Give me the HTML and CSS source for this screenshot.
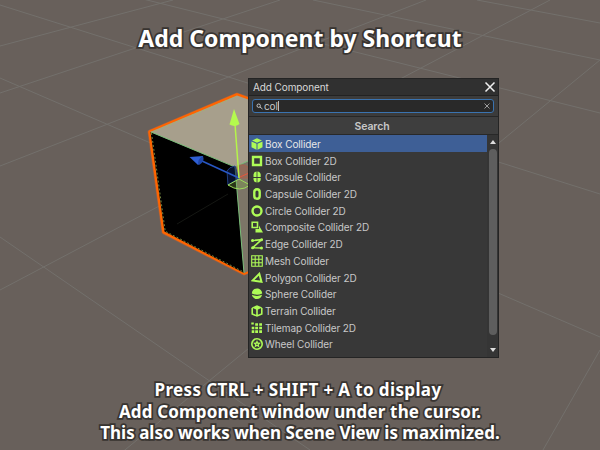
FILE: index.html
```html
<!DOCTYPE html>
<html lang="en">
<head>
<meta charset="utf-8">
<title>Add Component by Shortcut</title>
<link rel="stylesheet" href="styles.css">
</head>
<body>
<main class="stage">
  <svg class="scene" viewBox="0 0 600 450" aria-hidden="true">
    <g class="grid">
      <path d="M0 166L426 0M0 78L600 337M0 93L280 0M0 46L173 0M0 5L600 194M143 -1L600 113M313 0L600 60M477 0L600 23M550 0L0 290M600 60L120 454M0 237L310 450M600 350L543 450"/>
    </g>
    <path class="glow" d="M150 132L237 95L300 118L300 250L244 273L164 232Z"/>
    <path class="outline" d="M150 132L237 95L300 118L300 250L244 273L164 232Z"/>
    <path fill="#a79f8c" d="M150 132L237 95.500L300 118L300 140L235 167Z"/>
    <path fill="#000" d="M150.500 132L235 167L244 273L164.500 231.500Z"/>
    <path fill="#7c7567" d="M235 167L300 140V250L244 273Z"/>
    <path d="M177 224L228 194" stroke="#151713" stroke-width="1"/>
    <path class="edge" d="M151 132L235 167L244 273M235 167L270 151"/>
    <path class="dash" d="M151.500 132.500L237 96.200M151.500 133L165.200 231.200L244 272.200"/>
    <path fill="#0b1a4899" stroke="#203f82" d="M227 171Q229 167 235 166L239 178L228 185Z"/>
    <path fill="#c7543844" stroke="#b85b42" stroke-width=".7" d="M237 166Q244 163 249 168V178H239Z"/>
    <path fill="#7da64755" stroke="#9ddd5b" d="M228 185L239 179L250 185Q240 193 228 185Z"/>
    <path stroke="#2857c4" stroke-width="1.500" d="M202 161L239 178"/>
    <path fill="#2e5fd4" d="M189.500 157L203 156Q204 161 198 165Z"/>
    <path fill="#1f46a8" d="M199 165Q196 160 203 156Q205 162 199 165Z"/>
    <path stroke="#b5f549" stroke-width="1.500" d="M235 124L239 178"/>
    <path fill="#b4fa4e" d="M234 109L239.500 124Q235 127.500 229.500 124.500Z"/>
    <path stroke="#e8553b" d="M240 177L249 173"/>
  </svg>

  <h1 class="title">Add Component by Shortcut</h1>

  <section class="window">
    <header class="bar">
      <span>Add Component</span>
      <svg class="close" viewBox="0 0 12 12"><path d="M1.500 1.500L10.500 10.500M10.500 1.500L1.500 10.500"/></svg>
    </header>
    <div class="search">
      <div class="field">
        <svg class="lens" viewBox="0 0 7 7"><circle cx="2.700" cy="2.700" r="1.700"/><path d="M4 4L6.500 6"/></svg>
        <span class="query">col</span>
        <svg class="clear" viewBox="0 0 6 6"><path d="M.5 .5L5.500 5.500M5.500 .5L.5 5.500"/></svg>
      </div>
    </div>
    <div class="heading">Search</div>
    <div class="content">
      <ul class="list">
        <li class="selected"><svg viewBox="0 0 12 12"><path class="f" d="M6 .3L11 2.500L6 4.800L1 2.500ZM.5 3.500L5.500 5.700V11.700L.5 9.200ZM11.500 3.500L6.500 5.700V11.700L11.500 9.200Z"/></svg>Box Collider</li>
        <li><svg viewBox="0 0 12 12"><path class="thick" d="M2 2H10V10H2Z"/></svg>Box Collider 2D</li>
        <li><svg viewBox="0 0 12 12"><path class="f" d="M5.600 .4V6H2.500V3.500Q2.800 .8 5.600 .4ZM6.400 .4Q9.500 .8 9.700 3.500V6H6.400ZM2.500 6.900H5.600V11.600Q2.800 11.200 2.500 8.500ZM6.400 6.900H9.700V8.500Q9.500 11.200 6.400 11.600Z"/></svg>Capsule Collider</li>
        <li><svg viewBox="0 0 12 12"><rect class="thick" x="3.300" y="1.300" width="5.400" height="9.400" rx="2.700"/></svg>Capsule Collider 2D</li>
        <li><svg viewBox="0 0 12 12"><circle class="thick" cx="6" cy="6" r="4.500"/></svg>Circle Collider 2D</li>
        <li><svg viewBox="0 0 12 12"><path class="s" d="M1.200 1.200H6.500V6.500H1.200Z"/><path class="f" d="M8 4.500L12 11.500H4.500V8H8Z"/></svg>Composite Collider 2D</li>
        <li><svg viewBox="0 0 12 12"><path class="s" d="M1.500 2.500L10.500 1.700L1.700 9.700L10.500 10"/><g class="f"><circle cx="1.500" cy="2.500" r="1.500"/><circle cx="10.500" cy="1.800" r="1.500"/><circle cx="1.700" cy="9.700" r="1.500"/><circle cx="10.500" cy="10" r="1.500"/></g></svg>Edge Collider 2D</li>
        <li><svg viewBox="0 0 12 12"><path class="s thin" d="M.7 .7H11.300V11.300H.7ZM4.200 .7V11.300M7.800 .7V11.300M.7 4.200H11.300M.7 7.800H11.300"/></svg>Mesh Collider</li>
        <li><svg viewBox="0 0 12 12"><path class="s heavy" d="M8.300 1.800L10.500 9.800L1.700 8.500Z"/></svg>Polygon Collider 2D</li>
        <li><svg viewBox="0 0 12 12"><path class="f" d="M.8 5.400C1.200-1.100 10.800-1.100 11.200 5.400Q6 8 .8 5.400ZM.9 6.800Q6 9 11.100 6.800C10 12.500 2 12.500 .9 6.800Z"/></svg>Sphere Collider</li>
        <li><svg viewBox="0 0 12 12"><path class="f" d="M6 .3L11.300 2.500L6 5L.7 2.500Z"/><path class="s" d="M1.200 3V9L6 11L10.800 9V3M6 4V11"/></svg>Terrain Collider</li>
        <li><svg viewBox="0 0 12 12"><path class="f" d="M.3 .5H2.800V2.500H.3ZM4.200 1.200H7V3.700H4.200ZM8.200 1.200H11V3.700H8.200ZM.7 4.700H3.300V7.300H.7ZM4.200 4.700H7V7.300H4.200ZM8.200 4.700H11V7.300H8.200ZM.7 8.300H3.300V11H.7ZM4.200 8.300H7V11H4.200ZM8.200 8.300H11V11H8.200Z"/></svg>Tilemap Collider 2D</li>
        <li><svg viewBox="0 0 12 12"><circle class="s" cx="6" cy="6" r="5.200"/><path class="f" d="M6 2L7.100 4.600L9.900 4.800L7.800 6.700L8.500 9.500L6 8L3.500 9.500L4.200 6.700L2.100 4.800L4.900 4.600Z"/><circle cx="6" cy="6.200" r=".8" fill="#383838"/></svg>Wheel Collider</li>
      </ul>
      <div class="scrollbar">
        <svg viewBox="0 0 6 4"><path d="M0 4L3 0L6 4Z"/></svg>
        <div class="thumb"></div>
        <svg viewBox="0 0 6 4"><path d="M0 0L3 4L6 0Z"/></svg>
      </div>
    </div>
  </section>

  <p class="caption"><span class="l1">Press CTRL + SHIFT + A to display</span><span class="l2">Add Component window under the cursor.</span><span class="l3">This also works when Scene View is maximized.</span></p>
</main>
</body>
</html>
```
FILE: styles.css
```css
* { box-sizing: border-box; }
body { margin: 0; }
.stage {
  position: relative;
  width: 600px;
  height: 450px;
  overflow: hidden;
  background: #68605b;
  font-family: Inter, "Liberation Sans", sans-serif;
  display: flex;
  flex-direction: column;
}
.scene { position: absolute; inset: 0; width: 600px; height: 450px; fill: none; }
.grid { stroke: #73706c; stroke-width: 1; }
.glow { stroke: #d9642c; stroke-width: 5; stroke-linejoin: round; opacity: .45; }
.outline { stroke: #ff6500; stroke-width: 3.6; stroke-linejoin: round; }
.edge { stroke: #79bd78; stroke-width: 1; }
.dash { stroke: #a3bd5d; stroke-width: .7; stroke-dasharray: 2 2; }
.title, .caption {
  position: relative;
  margin: 0;
  color: #fff;
  font-family: "Noto Sans", "Open Sans", sans-serif;
  font-weight: 700;
  text-align: center;
  white-space: nowrap;
  -webkit-text-stroke: 3.5px #383431;
  paint-order: stroke fill;
}
.title { height: 78px; padding-top: 22px; font-size: 23px; line-height: 32px; }
.window {
  position: relative;
  width: 251px;
  height: 280px;
  margin-left: 248px;
  border: 1px solid #242424;
  background: #383838;
  color: #c8c8c8;
  font-size: 10px;
  letter-spacing: -.1px;
  display: flex;
  flex-direction: column;
}
.bar {
  height: 17px;
  padding: 0 2px 0 4px;
  display: flex;
  align-items: center;
  justify-content: space-between;
  background: #303030;
  border-bottom: 1px solid #222;
  color: #d8d8d8;
}
.close { width: 12px; height: 12px; fill: none; stroke: #f0f0f0; stroke-width: 1.5; }
.search { height: 21px; padding: 3px 4px 3px 3px; background: #3b3b3b; border-bottom: 1px solid #262626; }
.field {
  height: 14px;
  padding: 0 3px;
  border: 1px solid #3a73b0;
  border-radius: 3px;
  background: #292929;
  display: flex;
  align-items: center;
}
.lens { width: 7px; height: 7px; margin-right: 1px; fill: none; stroke: #c4c4c4; stroke-width: 1; }
.query { line-height: 10px; border-right: 1px solid #bbb; }
.clear { width: 6px; height: 6px; margin-left: auto; fill: none; stroke: #aaa; stroke-width: .9; }
.heading {
  height: 18px;
  line-height: 19px;
  padding-right: 3px;
  background: #3e3e3e;
  border-bottom: 1px solid #282828;
  text-align: center;
  font-size: 10.5px;
  font-weight: 600;
}
.content { flex: 1; display: flex; min-height: 0; }
.list { flex: 1; margin: 0; padding: 0; list-style: none; }
.list li { height: 16.7px; padding-left: 2px; display: flex; align-items: center; gap: 2px; white-space: nowrap; }
.list svg { width: 12px; height: 12px; flex: none; }
.list .selected { height: 17.4px; background: #3e5f96; color: #e8e8e8; }
.f { fill: #aefb57; }
.s, .thick { fill: none; stroke: #aefb57; stroke-width: 1.6; }
.thin { stroke-width: 1.1; }
.heavy { stroke-width: 2; }
.thick { stroke-width: 2.4; }
.scrollbar {
  width: 11px;
  padding: 5px 0 5px;
  background: #353535;
  display: flex;
  flex-direction: column;
  align-items: center;
}
.scrollbar svg { width: 6px; height: 4px; fill: #dedede; }
.thumb { width: 8px; height: 186px; margin: 5px 0 13px; border-radius: 4px; background: #5e5e5e; }
.caption { padding-top: 21px; font-size: 17px; line-height: 21.5px; }
.caption span { display: block; }
.l1 { padding-right: 4px; letter-spacing: .37px; }
.l2 { letter-spacing: .16px; }
```
